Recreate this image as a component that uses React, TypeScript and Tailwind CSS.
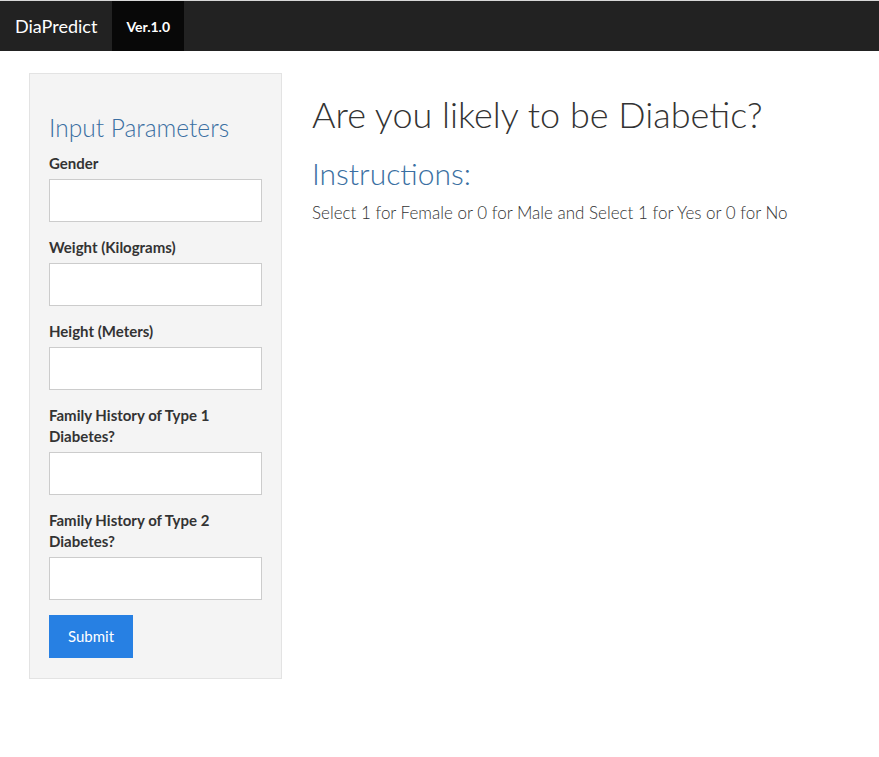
import React from "react";

const font = { fontFamily: "Lato, 'Open Sans', 'Liberation Sans', sans-serif" };

function Field({ label, mb = "mb-[15px]" }: { label: React.ReactNode; mb?: string }) {
  return (
    <div className={mb}>
      <label className="block text-[15px] leading-[21px] font-bold text-[#333] mb-[5px]">{label}</label>
      <div className="h-[43px] w-full bg-white border border-[#cccccc]" />
    </div>
  );
}

export default function App() {
  return (
    <div style={font} className="min-h-[757px] bg-white text-[#333]">
      <div className="border-t border-[#d8d8d8] h-[51px] bg-[#222222] flex items-stretch">
        <div className="px-[15px] flex items-center text-white text-[18px]">DiaPredict</div>
        <div className="px-[14px] flex items-center bg-[#080808] text-white text-[14px] font-bold">Ver.1.0</div>
      </div>
      <div className="flex pt-[22px] pl-[29px]">
        <div className="w-[253px] shrink-0 bg-[#f4f4f4] border border-[#e3e3e3] p-[19px]">
          <h3 className="text-[24.5px] leading-[26px] font-light text-[#3a6fa2] mt-[22px] mb-[12px]">Input Parameters</h3>
          <Field label="Gender" />
          <Field label="Weight (Kilograms)" />
          <Field label="Height (Meters)" />
          <Field label={<>Family History of Type 1<br />Diabetes?</>} />
          <Field label={<>Family History of Type 2<br />Diabetes?</>} mb="mb-[15px]" />
          <button className="h-[43px] w-[84px] bg-[#2780e3] text-white text-[15px] mb-[1px]">Submit</button>
        </div>
        <div className="pl-[30px]">
          <h1 className="text-[36px] leading-[40px] font-light text-[#333] mt-[21px] mb-[10px]">Are you likely to be Diabetic?</h1>
          <h2 className="text-[30px] leading-[33px] font-light text-[#3a6fa2] mt-[23px] mb-[10px]">Instructions:</h2>
          <p className="text-[17px] leading-[21px] font-light text-[#333] mt-[12px]">Select 1 for Female or 0 for Male and Select 1 for Yes or 0 for No</p>
        </div>
      </div>
    </div>
  );
}
